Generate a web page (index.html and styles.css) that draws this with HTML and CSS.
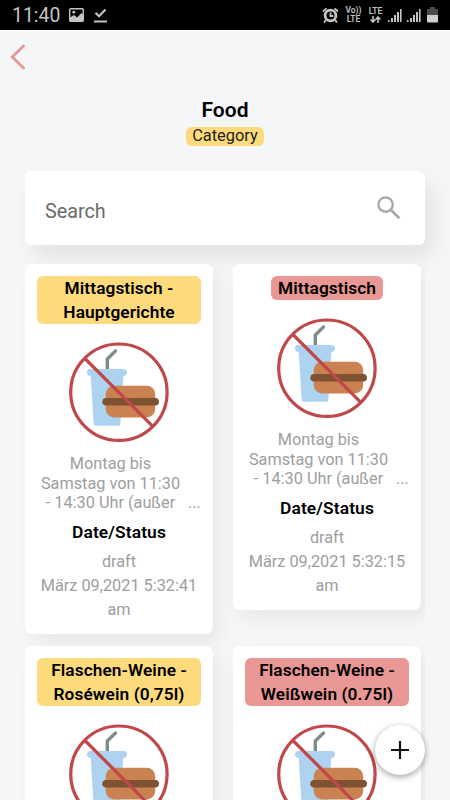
FILE: index.html
```html
<!DOCTYPE html>
<html lang="de">
<head>
<meta charset="utf-8">
<title>Food</title>
<link rel="stylesheet" href="styles.css">
</head>
<body>
<svg class="defs" aria-hidden="true">
  <symbol id="no-food" viewBox="0 0 100 100">
    <path d="M38.3 28V17L46.5 9" fill="none" stroke="#7f8c8d" stroke-width="3.4" stroke-linecap="round" stroke-linejoin="round"/>
    <path d="M21.5 31H54.5L51.3 82Q51.2 83.7 49.6 83.7H26.4Q24.8 83.7 24.7 82Z" fill="#aed3f1"/>
    <rect x="18" y="27" width="40" height="6.8" rx="3.4" fill="#aed3f1"/>
    <rect x="36.7" y="43.8" width="49.5" height="31.6" rx="8.5" fill="#cb8252"/>
    <rect x="33.3" y="56" width="56.7" height="7.6" rx="3.8" fill="#7f5331"/>
    <g fill="none" stroke="#c0484b" stroke-width="3.2">
      <circle cx="49.9" cy="50.2" r="48.2"/>
      <path d="M15.4 16L84 84.6"/>
    </g>
  </symbol>
</svg>
<div class="screen">
  <header class="status">
    <span class="time">11:40</span>
    <svg class="picture" width="15" height="14" viewBox="0 0 15 14"><rect x=".7" y=".7" width="13.6" height="12.6" rx="1" fill="none" stroke="#c4c4c4" stroke-width="1.4"/><path d="M1 13V9.5L5 7 8 9.5 12.5 5 14 6.5V13Z" fill="#c4c4c4"/><circle cx="4.8" cy="4.2" r="1.4" fill="#c4c4c4"/></svg>
    <svg class="done" width="13" height="15" viewBox="0 0 13 15" fill="none" stroke="#c4c4c4" stroke-width="2.2"><path d="M1.5 4.8L5 8.3 11.5 1.5M0 13.5H13"/></svg>
    <div class="tray">
      <svg width="17" height="16" viewBox="0 0 17 16"><circle cx="8.5" cy="8.5" r="5.4" fill="none" stroke="#c4c4c4" stroke-width="2.8"/><path d="M1 4.5L4.5 1.3M16 4.5L12.5 1.3M4 13L2 15.3M13 13L15 15.3M8.5 5.5V9H11.3" fill="none" stroke="#c4c4c4" stroke-width="1.8"/></svg>
      <span class="net volte"><span>Vo))</span><span>LTE</span></span>
      <span class="net lte">LTE<svg width="11" height="7" viewBox="0 0 11 7" fill="none" stroke="#c4c4c4" stroke-width="1.6"><path d="M3 0V6M.6 3.5L3 6 5.4 3.5M8 7V1M5.6 3.5L8 1 10.4 3.5"/></svg></span>
      <svg class="signal" width="14" height="15" viewBox="0 0 14 15" fill="#c4c4c4"><path d="M0 12h1.5v2H0zM3 10h2v4H3zM6 7h2v7H6zM9 4h2v10H9zM12 1h1.6v13H12z"/></svg>
      <svg class="signal" width="14" height="15" viewBox="0 0 14 15" fill="#c4c4c4"><path d="M0 12h1.5v2H0zM3 10h2v4H3zM6 7h2v7H6zM9 4h2v10H9zM12 1h1.6v13H12z"/></svg>
      <svg class="battery" width="11" height="16" viewBox="0 0 11 16"><path d="M3 0H8V2H11V8H0V2H3Z" fill="#4a4a4a"/><path d="M0 8H11V14.5Q11 15.5 10 15.5H1Q0 15.5 0 14.5Z" fill="#d0d0d0"/></svg>
    </div>
  </header>
  <nav class="nav"><svg width="16" height="26" viewBox="0 0 16 26"><path d="M13.5 2L2.3 13 13.5 24" fill="none" stroke="#e59a98" stroke-width="3" stroke-linecap="round"/></svg></nav>
  <div class="heading">
    <h1>Food</h1>
    <span class="tag">Category</span>
  </div>
  <div class="search">
    <span>Search</span>
    <svg width="24" height="24" viewBox="0 0 24 24" fill="none" stroke="#a9a9a9"><circle cx="8.6" cy="8.6" r="7.2" stroke-width="2.4"/><path d="M14 14L22.3 22.3" stroke-width="2.8"/></svg>
  </div>
  <main class="grid">
    <article class="card">
      <h2 class="label yellow">Mittagstisch - Hauptgerichte</h2>
      <svg class="art"><use href="#no-food"/></svg>
      <div class="desc"><p>Montag bis Samstag von 11:30 - 14:30 Uhr (außer</p><span>...</span></div>
      <h3>Date/Status</h3>
      <p class="meta">draft<br>März 09,2021 5:32:41 am</p>
    </article>
    <article class="card">
      <h2 class="label red">Mittagstisch</h2>
      <svg class="art"><use href="#no-food"/></svg>
      <div class="desc"><p>Montag bis Samstag von 11:30 - 14:30 Uhr (außer</p><span>...</span></div>
      <h3>Date/Status</h3>
      <p class="meta">draft<br>März 09,2021 5:32:15 am</p>
    </article>
    <article class="card tall">
      <h2 class="label yellow">Flaschen-Weine - Roséwein (0,75l)</h2>
      <svg class="art"><use href="#no-food"/></svg>
    </article>
    <article class="card tall">
      <h2 class="label red">Flaschen-Weine - Weißwein (0.75l)</h2>
      <svg class="art"><use href="#no-food"/></svg>
    </article>
  </main>
  <button class="fab" aria-label="Add"><svg width="18" height="18" viewBox="0 0 18 18"><path d="M9 0V18M0 9H18" stroke="#111318" stroke-width="2.2"/></svg></button>
</div>
</body>
</html>
```
FILE: styles.css
```css
* { box-sizing: border-box; margin: 0; }
body { font-family: Roboto, sans-serif; color: #000; }
.defs { position: absolute; width: 0; height: 0; }
.screen {
  position: relative;
  height: 800px;
  overflow: hidden;
  background: #f5f6f8;
  display: flex;
  flex-direction: column;
}
.status {
  flex: none;
  height: 30px;
  background: #000;
  color: #c4c4c4;
  display: flex;
  align-items: center;
  padding: 0 12px;
}
.time { font-size: 19.4px; width: 57px; }
.picture { margin-right: 10px; }
.tray { margin-left: auto; display: flex; align-items: center; }
.net { font-size: 8.5px; line-height: 9px; font-weight: 600; display: flex; flex-direction: column; align-items: center; }
.volte { margin-left: 6px; width: 17px; }
.lte { margin-left: 6px; width: 15px; }
.signal { margin-left: 5px; }
.battery { margin-left: 6px; }
.nav { flex: none; height: 66px; padding: 14px 10px; }
.heading { flex: none; height: 75px; display: flex; flex-direction: column; align-items: center; }
h1 { font-size: 21px; line-height: 28px; font-weight: 600; }
.tag { margin-top: 3px; height: 19px; line-height: 18px; padding: 0 6px; border-radius: 6px; background: #fddb7c; font-size: 16.4px; color: #222; }
.search {
  flex: none;
  height: 74px;
  margin: 0 25px;
  padding: 0 24px 0 20px;
  display: flex;
  justify-content: space-between;
  align-items: center;
  background: #fff;
  border-radius: 6px;
  box-shadow: 8px 12px 20px rgba(0, 0, 0, .08);
}
.search span { font-size: 19.8px; color: #6a6a6a; padding-top: 6px; }
.grid {
  flex: 1;
  margin: 0 25px;
  padding-top: 19px;
  display: grid;
  grid-template-columns: 188px 188px;
  column-gap: 20px;
  row-gap: 12px;
  align-items: start;
  align-content: start;
  clip-path: inset(0 0 0 -25px);
}
.card {
  background: #fff;
  border-radius: 7px;
  padding: 12px;
  display: flex;
  flex-direction: column;
  align-items: center;
  text-align: center;
  box-shadow: 7px 8px 18px rgba(0, 0, 0, .06);
}
.tall { height: 370px; }
.label { font-size: 17.3px; letter-spacing: .08px; line-height: 24px; font-weight: 600; padding: 0 7px; border-radius: 6px; }
.yellow { background: #fddb7c; }
.red { background: #e89794; }
.art { width: 100px; height: 100px; margin-top: 18px; flex: none; }
.desc { align-self: stretch; display: flex; align-items: flex-end; margin-top: 12px; font-size: 16.3px; line-height: 19.5px; color: #9e9e9e; }
.desc p { width: 147px; padding: 0 1px; flex: none; }
.desc span { margin-left: 4px; }
h3 { font-size: 17.4px; letter-spacing: .1px; line-height: 24px; font-weight: 600; margin-top: 7.5px; }
.meta { font-size: 16.3px; line-height: 24px; margin-top: 6px; color: #9e9e9e; }
.fab {
  position: absolute;
  right: 25px;
  top: 725px;
  width: 50px;
  height: 50px;
  border: 0;
  border-radius: 50%;
  background: #fff;
  display: grid;
  place-items: center;
  box-shadow: 0 2px 6px rgba(0, 0, 0, .38);
}
```
